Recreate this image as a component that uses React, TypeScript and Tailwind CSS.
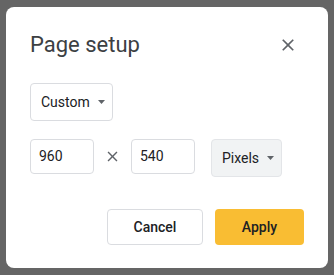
import React from "react";

function CaretDown() {
  return (
    <svg width="7" height="4" viewBox="0 0 7 4" className="shrink-0">
      <path d="M0 0h7L3.5 4z" fill="#5f6368" />
    </svg>
  );
}

function CloseIcon({ size, color }: { size: number; color: string }) {
  return (
    <svg width={size} height={size} viewBox="0 0 24 24">
      <path
        d="M19 6.41L17.59 5 12 10.59 6.41 5 5 6.41 10.59 12 5 17.59 6.41 19 12 13.41 17.59 19 19 17.59 13.41 12z"
        fill={color}
      />
    </svg>
  );
}

export default function App() {
  return (
    <div
      className="h-[275px] w-[334px] bg-[#656565] pl-[6px] pt-[7px]"
      style={{ fontFamily: "Roboto, 'Liberation Sans', sans-serif" }}
    >
      <div className="flex h-[261px] w-[322px] flex-col rounded-lg bg-white px-6 pt-6">
        <div className="flex h-[28px] items-center justify-between">
          <h1 className="text-[22px] leading-[28px] text-[#3c4043]">Page setup</h1>
          <button className="mr-[6px] flex h-5 w-5 items-center justify-center">
            <CloseIcon size={20} color="#5f6368" />
          </button>
        </div>

        <div className="mt-[23.5px] flex h-[38px] w-[83px] items-center gap-2 rounded border border-[#dadce0] pl-[10px] text-sm text-[#202124]">
          <span>Custom</span>
          <CaretDown />
        </div>

        <div className="mt-[18px] flex items-start">
          <div className="flex h-[35px] w-[64px] items-center rounded border border-[#dadce0] pl-2 text-sm text-[#202124]">
            960
          </div>
          <div className="flex h-[35px] w-[37px] items-center justify-center">
            <CloseIcon size={17} color="#5f6368" />
          </div>
          <div className="flex h-[35px] w-[64px] items-center rounded border border-[#dadce0] pl-2 text-sm text-[#202124]">
            540
          </div>
          <div className="ml-4 flex h-[38px] w-[71px] items-center gap-2 rounded border border-[#e3e5e8] bg-[#f1f3f4] pl-[10px] text-sm text-[#202124]">
            <span>Pixels</span>
            <CaretDown />
          </div>
        </div>

        <div className="mt-8 flex justify-end gap-3">
          <button className="h-[36px] w-[96px] rounded border border-[#dadce0] bg-white text-sm font-medium text-[#202124]">
            Cancel
          </button>
          <button className="h-[36px] w-[89px] rounded bg-[#f9bd33] text-sm font-medium text-[#202124]">
            Apply
          </button>
        </div>
      </div>
    </div>
  );
}
